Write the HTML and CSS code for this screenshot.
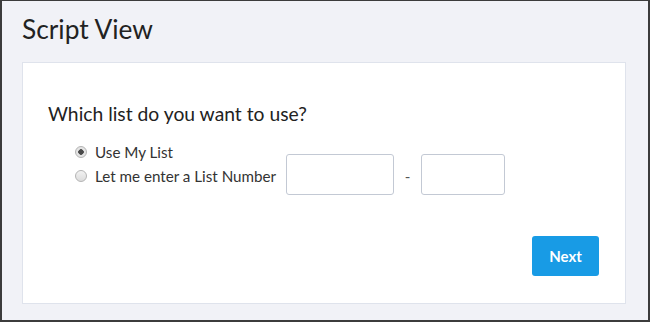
FILE: index.html
```html
<!DOCTYPE html>
<html lang="en">
<head>
    <meta charset="UTF-8">
    <title>Script View</title>
    <link rel="stylesheet" href="styles.css">
</head>
<body>
    <div class="frame">
        <h1 class="title">Script View</h1>
        <div class="card">
            <h2 class="question">Which list do you want to use?</h2>
            <div class="options">
                <label class="option">
                    <input type="radio" name="list" checked>
                    <span>Use My List</span>
                </label>
                <div class="option">
                    <label class="option-label">
                        <input type="radio" name="list">
                        <span>Let me enter a List Number</span>
                    </label>
                    <input type="text" class="num num-a">
                    <span class="dash">-</span>
                    <input type="text" class="num num-b">
                </div>
            </div>
            <div class="actions">
                <button class="next-btn">Next</button>
            </div>
        </div>
    </div>
</body>
</html>
```

FILE: styles.css
```css
body {
    margin: 0;
    font-family: Lato, "Open Sans", sans-serif;
    color: #222;
}

.frame {
    box-sizing: border-box;
    width: 650px;
    height: 322px;
    border: 2px solid #3c3c3c;
    border-top-width: 1px;
    background-color: #f1f2f7;
    padding: 0 22px 0 20px;
}

.title {
    margin: 0;
    padding: 12px 0 0 0;
    height: 49px;
    font-size: 26.3px;
    font-weight: normal;
    color: #222;
}

.card {
    box-sizing: border-box;
    height: 242px;
    background-color: #fff;
    border: 1px solid #dfe3ec;
    padding: 37px 26px 0 25px;
}

.question {
    margin: 0;
    font-size: 19.3px;
    font-weight: normal;
    line-height: 28px;
    color: #222;
}

.options {
    margin-top: 12px;
    padding-left: 27px;
    font-size: 15.2px;
    color: #333;
}

.option {
    display: flex;
    align-items: center;
    height: 24px;
}

.option-label {
    display: flex;
    align-items: center;
}

.option input[type="radio"] {
    appearance: none;
    box-sizing: border-box;
    margin: 0 8px 0 0;
    width: 12px;
    height: 12px;
    border: 1px solid #b4b4b4;
    border-radius: 50%;
    background: linear-gradient(#f2f2f2, #dcdcdc);
}

.option input[type="radio"]:checked {
    background: radial-gradient(circle, #4a4a4a 0 2.5px, #e4e4e4 3px);
}

.num {
    box-sizing: border-box;
    height: 41px;
    margin: -4px 0 0 10px;
    border: 1px solid #c3c9d4;
    border-radius: 3px;
    background: #fff;
}

.num-a {
    width: 108px;
}

.num-b {
    width: 84px;
    margin-left: 0;
}

.dash {
    width: 27px;
    text-align: center;
    color: #555;
}

.actions {
    display: flex;
    justify-content: flex-end;
    margin-top: 48px;
}

.next-btn {
    width: 67px;
    height: 40px;
    border: none;
    border-radius: 3px;
    background-color: #189be5;
    color: #fff;
    font-family: Lato, sans-serif;
    font-weight: bold;
    font-size: 15px;
}
```
